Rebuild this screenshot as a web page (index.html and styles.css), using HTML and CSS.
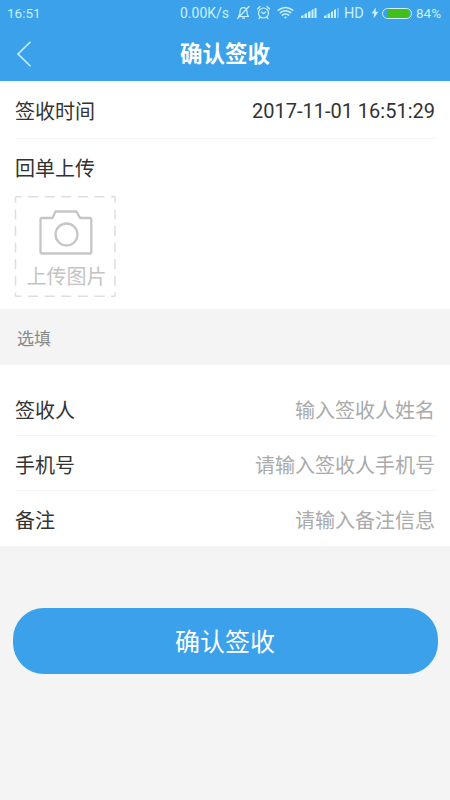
FILE: index.html
```html
<!DOCTYPE html>
<html lang="zh-CN">
<head>
<meta charset="utf-8">
<meta name="viewport" content="width=device-width, initial-scale=1">
<title>确认签收</title>
<link rel="stylesheet" href="styles.css">
</head>
<body>
<header class="top">
  <div class="status">
    <span class="clock">16:51</span>
    <span class="speed">0.00K/s</span>
    <svg class="status-icons" width="104" height="16" viewBox="236 5 104 16" fill="none" stroke="currentColor" stroke-width="1.2" stroke-linecap="round" stroke-linejoin="round">
      <path d="M238.500 16.500c1.500-1.300 1.500-2.500 1.500-4.500c0-2.500 1.500-4.300 3.500-4.300s3.500 1.800 3.500 4.300c0 2 0 3.200 1.500 4.500zM242.500 18.200h2M237.500 18.500L249 6.500"/>
      <circle cx="263.500" cy="13" r="5"/>
      <path d="M261.500 12l2 1.700l2.300-1.700M257.500 9l2.500-2.500M269.500 9L267 6.500M260 17.500l-1 1M267 17.500l1 1"/>
      <path stroke-width="1.500" d="M278.300 10.200q7.200-5.400 14.400 0M280.300 12.700q5.200-3.800 10.400 0M282.300 15.100q3.200-2.300 6.400 0"/>
      <path fill="currentColor" stroke="none" d="M284 17q1.500-1.200 3 0L285.500 18.700zM301 18v-2l2.500-1v3zM304.500 18v-4l2.500-1v5zM308 18v-6l2.500-1v7zM311.500 18v-8l2-1v9zM314.500 18V8.500l2-.8V18zM324 18v-2l2.500-1v3zM327.500 18v-4l2.500-1v5zM331 18v-6l2-1v7zM334 18v-8l2-1v9z"/>
      <path fill="currentColor" stroke="none" opacity=".4" d="M337 18V8.500l2-.8V18z"/>
    </svg>
    <span class="hd">HD</span>
    <svg class="bolt" width="8" height="12" viewBox="0 0 8 12"><path fill="currentColor" d="M4.800.5L.5 6.600h2.700L2.500 11.500L7.500 4.800H4.600z"/></svg>
    <span class="battery"></span>
    <span class="percent">84%</span>
  </div>
  <div class="nav">
    <svg class="back" width="16" height="28" viewBox="0 0 16 28"><path d="M14.500 1.800L2 14L14.500 26.200" fill="none" stroke="currentColor" stroke-width="1.600"/></svg>
    <h1>确认签收</h1>
  </div>
</header>
<main>
  <section class="card">
    <div class="row time"><span>签收时间</span><time>2017-11-01 16:51:29</time></div>
    <div class="upload">
      <h2>回单上传</h2>
      <div class="picker">
        <svg class="frame" width="102" height="102" viewBox="0 0 102 102" fill="none" stroke="#dedede" stroke-width="1.500">
          <path stroke-dasharray="10 6.600" stroke-dashoffset="4" d="M1.500 .8H101.500M1.500 100.300H101.500M1.500 .8V100.300M101 .8V100.300"/>
        </svg>
        <svg width="56" height="46" viewBox="0 0 56 46" fill="none" stroke="#c6c6c6" stroke-width="2.300" stroke-linejoin="round">
          <path d="M3 9H13.500L16.500 2.500H37.500L41 9H51Q52.300 9 52.300 10.500V43Q52.300 44.500 51 44.500H3Q1.500 44.500 1.500 43V10.500Q1.500 9 3 9z"/>
          <circle cx="27.500" cy="25.500" r="11"/>
        </svg>
        <span>上传图片</span>
      </div>
    </div>
  </section>
  <div class="optional">选填</div>
  <section class="card form">
    <label class="row"><span>签收人</span><input type="text" placeholder="输入签收人姓名"></label>
    <label class="row"><span>手机号</span><input type="tel" placeholder="请输入签收人手机号"></label>
    <label class="row"><span>备注</span><input type="text" placeholder="请输入备注信息"></label>
  </section>
  <button class="submit" type="button">确认签收</button>
</main>
</body>
</html>
```
FILE: styles.css
```css
* { box-sizing: border-box; }
body {
  margin: 0;
  min-height: 800px;
  background: #f4f4f4;
  color: #333;
  font: 20px/30px Roboto, "Noto Sans CJK SC", sans-serif;
}
.top { height: 81px; background: #3aa1ea; color: #fff; }
.status {
  display: flex;
  align-items: center;
  height: 26px;
  padding: 0 8px 0 7px;
  color: #c9f1ff;
  font-size: 13.500px;
  line-height: 26px;
  white-space: nowrap;
}
.speed { margin-left: auto; width: 50px; font-size: 14px; }
.status-icons { margin-left: 6px; }
.hd { margin-left: 4px; width: 22px; padding-top: 1px; font-size: 14.500px; }
.bolt { margin-left: 5px; }
.battery {
  width: 30px;
  height: 11px;
  margin: 0 4px 0 3px;
  border: 1px solid #c9f1ff;
  border-radius: 6px;
  background: linear-gradient(#43bf1a, #43bf1a) 4px 0 / 22px 9px no-repeat;
}
.percent { width: 26px; font-size: 13.500px; }
.nav {
  display: grid;
  grid-template-columns: 16px 1fr 16px;
  align-items: center;
  height: 55px;
  padding: 0 16px;
}
.back { color: #c9f1ff; }
h1 { margin: 0; padding-top: 1px; text-align: center; font-size: 22.500px; font-weight: 700; }
.card { background: #fff; }
.row {
  display: flex;
  align-items: center;
  justify-content: space-between;
  height: 55px;
  margin: 0 15px;
  padding-top: 5px;
  border-bottom: 1px solid #f5f5f5;
}
.time { height: 58px; padding-top: 4px; }
.time time { padding-bottom: 2px; }
.upload { height: 170px; padding: 15px 14px 0; }
h2 { margin: 0 0 12px 1px; font-size: 20px; font-weight: 400; }
.picker {
  position: relative;
  display: flex;
  flex-direction: column;
  align-items: center;
  width: 102px;
  height: 102px;
  padding: 13px 0 0 3px;
  color: #c4c4c4;
}
.picker span { margin-top: 7px; line-height: 30px; }
.frame { position: absolute; inset: 0; }
.optional { height: 56px; padding-left: 17px; color: #888; font-size: 17px; line-height: 60px; }
.form { padding-top: 16px; }
.form .row:last-child { border-color: transparent; }
input {
  width: 240px;
  padding: 0;
  border: 0;
  outline: 0;
  background: none;
  font: inherit;
  text-align: right;
}
input::placeholder { color: #aaa; opacity: 1; }
.submit {
  display: block;
  width: 425px;
  height: 66px;
  margin: 62.400px 12.500px 0;
  padding: 3px 0 0;
  border: 0;
  border-radius: 31px;
  background: #3aa1ea;
  color: #fff;
  font: 25px/63px Roboto, "Noto Sans CJK SC", sans-serif;
}
```
